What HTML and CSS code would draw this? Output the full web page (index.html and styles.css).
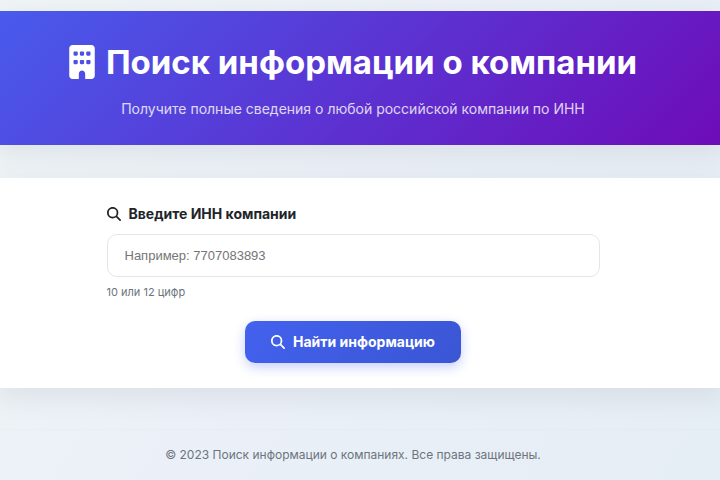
FILE: index.html
```html
<!DOCTYPE html>
<html lang="ru">
<head>
    <meta charset="UTF-8">
    <meta name="viewport" content="width=device-width, initial-scale=1.0">
    <title>Поиск информации о компании</title>
    <link rel="stylesheet" href="styles.css">
</head>
<body>
    <!-- Header -->
    <header class="header">
        <h1 class="title">
            <svg class="icon-building" viewBox="0 0 384 512" aria-hidden="true"><path fill="currentColor" d="M48 0C21.500 0 0 21.500 0 48V464c0 26.500 21.500 48 48 48h96V432c0-26.500 21.500-48 48-48s48 21.500 48 48v80h96c26.500 0 48-21.500 48-48V48c0-26.500-21.500-48-48-48H48zM64 240c0-8.800 7.200-16 16-16h32c8.800 0 16 7.200 16 16v32c0 8.800-7.200 16-16 16H80c-8.800 0-16-7.200-16-16V240zm112-16h32c8.800 0 16 7.200 16 16v32c0 8.800-7.200 16-16 16H176c-8.800 0-16-7.200-16-16V240c0-8.800 7.200-16 16-16zm80 16c0-8.800 7.200-16 16-16h32c8.800 0 16 7.200 16 16v32c0 8.800-7.200 16-16 16H272c-8.800 0-16-7.200-16-16V240zM80 96h32c8.800 0 16 7.200 16 16v32c0 8.800-7.200 16-16 16H80c-8.800 0-16-7.200-16-16V112c0-8.800 7.200-16 16-16zm80 16c0-8.800 7.200-16 16-16h32c8.800 0 16 7.200 16 16v32c0 8.800-7.200 16-16 16H176c-8.800 0-16-7.200-16-16V112zM272 96h32c8.800 0 16 7.200 16 16v32c0 8.800-7.200 16-16 16H272c-8.800 0-16-7.200-16-16V112c0-8.800 7.200-16 16-16z"/></svg>
            <span>Поиск информации о компании</span>
        </h1>
        <p class="subtitle">Получите полные сведения о любой российской компании по ИНН</p>
    </header>

    <!-- Search form -->
    <main class="card">
        <form class="search-form">
            <label class="form-label" for="inn">
                <svg class="icon-search" viewBox="0 0 512 512" aria-hidden="true"><path fill="currentColor" d="M416 208c0 45.900-14.900 88.300-40 122.700L502.600 457.400c12.500 12.500 12.500 32.800 0 45.300s-32.800 12.500-45.300 0L330.700 376c-34.400 25.200-76.800 40-122.700 40C93.100 416 0 322.900 0 208S93.100 0 208 0S416 93.100 416 208zM208 352a144 144 0 1 0 0-288 144 144 0 1 0 0 288z"/></svg>
                <span>Введите ИНН компании</span>
            </label>
            <input class="form-input" type="text" id="inn" placeholder="Например: 7707083893" aria-describedby="inn-hint">
            <small class="form-hint" id="inn-hint">10 или 12 цифр</small>
            <button class="btn" type="submit">
                <svg class="icon-search" viewBox="0 0 512 512" aria-hidden="true"><path fill="currentColor" d="M416 208c0 45.900-14.900 88.300-40 122.700L502.600 457.400c12.500 12.500 12.500 32.800 0 45.300s-32.800 12.500-45.300 0L330.700 376c-34.400 25.200-76.800 40-122.700 40C93.100 416 0 322.900 0 208S93.100 0 208 0S416 93.100 416 208zM208 352a144 144 0 1 0 0-288 144 144 0 1 0 0 288z"/></svg>
                <span>Найти информацию</span>
            </button>
        </form>
    </main>

    <!-- Footer -->
    <footer class="footer">
        <p>© 2023 Поиск информации о компаниях. Все права защищены.</p>
    </footer>
</body>
</html>
```

FILE: styles.css
```css
* {
    box-sizing: border-box;
    margin: 0;
    padding: 0;
}

/* Basic styling */
body {
    font-family: Inter, "Liberation Sans", sans-serif;
    font-size: 14px;
    color: #212529;
    background: linear-gradient(120deg, #eff4f6 0%, #ebf0f8 45%, #e5edf5 100%);
    min-height: 100vh;
    padding-top: 11px;
}

/* Header styling */
.header {
    display: flex;
    flex-direction: column;
    align-items: center;
    gap: 16px;
    padding: 30px 30px 27px 16px;
    background: linear-gradient(135deg, #485bec, #6e0cb8);
    color: #fff;
    text-align: center;
    box-shadow: 0 8px 24px 4px rgba(0, 0, 0, 0.06);
}
.title {
    display: flex;
    align-items: center;
    gap: 11px;
    font-size: 33px;
    font-weight: 700;
    line-height: 42px;
}
.icon-building {
    flex: none;
    width: 26px;
    height: 34px;
}
.subtitle {
    font-size: 14px;
    font-weight: 400;
    line-height: 19px;
    opacity: 0.8;
}

/* Form styling */
.card {
    margin-top: 33px;
    padding: 26px 30px 25px 16px;
    background-color: #fff;
    box-shadow: 0 8px 24px 4px rgba(0, 0, 0, 0.06);
}
.search-form {
    display: flex;
    flex-direction: column;
    max-width: 493px;
    margin: 0 auto;
}
.form-label {
    display: flex;
    align-items: center;
    gap: 8px;
    font-weight: 700;
    line-height: 20px;
    margin-bottom: 10px;
}
.icon-search {
    flex: none;
    width: 14px;
    height: 14px;
}
.form-input {
    width: 100%;
    height: 43px;
    padding: 0 17px;
    border: 1px solid #e4e6e8;
    border-radius: 10px;
    background-color: #fff;
    color: #212529;
    font-family: "Liberation Sans", Arial, sans-serif;
    font-size: 13px;
}
.form-input::placeholder {
    color: #757575;
}
.form-hint {
    margin-top: 7px;
    color: #6c757d;
    font-size: 11px;
    line-height: 16px;
}
.btn {
    display: flex;
    align-items: center;
    gap: 8px;
    align-self: center;
    margin-top: 21px;
    padding: 12px 26px;
    border: none;
    border-radius: 10px;
    background: linear-gradient(135deg, #4361ee, #3a56d4);
    box-shadow: 0 4px 12px rgba(67, 97, 238, 0.3);
    color: #fff;
    font-family: inherit;
    font-size: 14px;
    font-weight: 700;
    line-height: 18px;
    cursor: pointer;
}

/* Footer styling */
.footer {
    margin-top: 41px;
    padding: 16px 30px 16px 16px;
    border-top: 1px solid rgba(0, 0, 0, 0.01);
    color: #6c757d;
    font-size: 12px;
    line-height: 18px;
    text-align: center;
}
```
